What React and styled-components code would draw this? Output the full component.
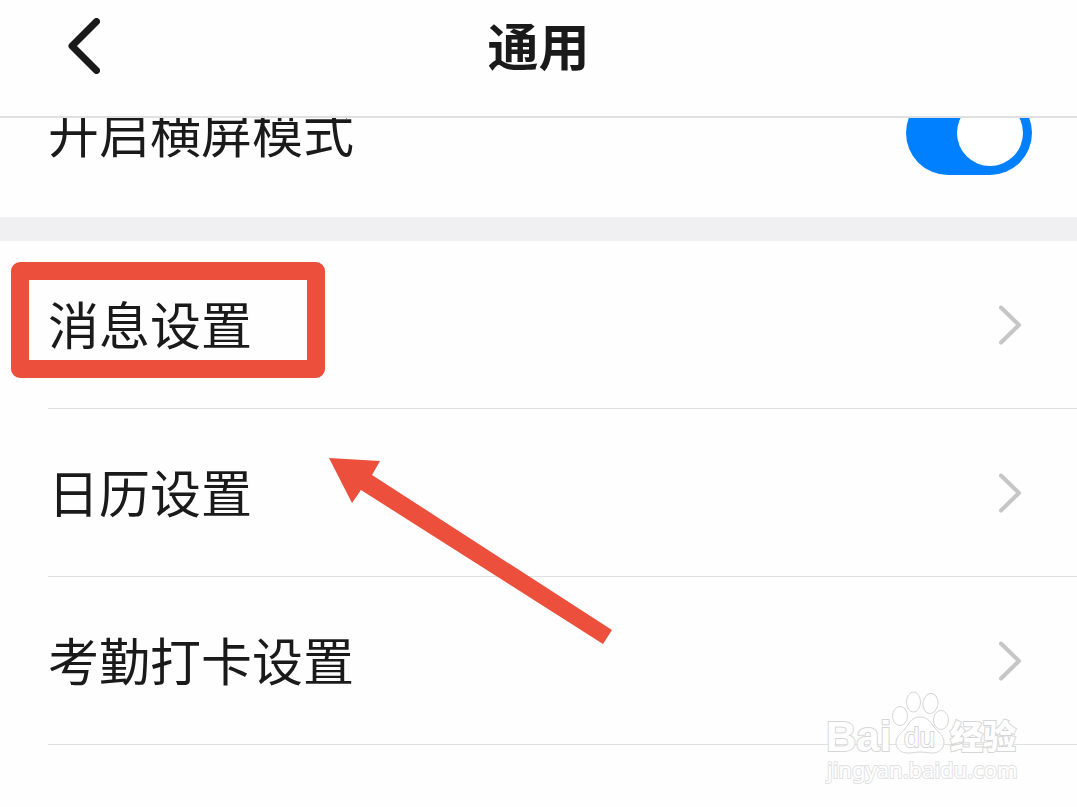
import React, { useState } from 'react';
import styled, { createGlobalStyle } from 'styled-components';

const GlobalStyle = createGlobalStyle`
  * {
    box-sizing: border-box;
  }
  body {
    margin: 0;
    background: #fefefe;
    color: #1a1a1a;
    font-family: "Noto Sans CJK SC", sans-serif;
    overflow: hidden;
  }
`;

const items = ['消息设置', '日历设置', '考勤打卡设置'];

const Chevron = () => (
  <svg width="24" height="40" viewBox="0 0 24 40" fill="none" stroke="#c6c6c6" strokeWidth="4" strokeLinecap="round" strokeLinejoin="round">
    <path d="M3 2.5 L21 20 L3 37.5" />
  </svg>
);

const Watermark = () => (
  <Mark width="200" height="100" viewBox="0 0 200 100" fill="#fff" fillOpacity="0.7" stroke="#d6d6d6" strokeWidth="1">
    <ellipse cx="75" cy="28" rx="7.5" ry="9.5" />
    <ellipse cx="88.5" cy="14" rx="7" ry="10" />
    <ellipse cx="105.5" cy="15.5" rx="7.5" ry="10" transform="rotate(8 105.5 15.5)" />
    <ellipse cx="116" cy="32" rx="7.5" ry="9.5" />
    <path d="M95 29 C87 29 84 35 80 41 C75 46 71 49 71 55 C71 62 77 65 83 65 C88 65 91 64 95 64 C100 64 103 65 107 65 C114 65 119 61 119 54 C119 48 114 45 110 40 C106 35 103 29 95 29 Z" />
    <text x="1" y="63" fontFamily="Liberation Sans" fontWeight="700" fontSize="42">Bai</text>
    <text x="79" y="59" fontFamily="Liberation Sans" fontSize="28">du</text>
    <text x="125" y="61" fontFamily="Noto Sans CJK SC" fontWeight="900" fontSize="33">经验</text>
    <text x="2" y="90" fontFamily="Noto Sans" fontSize="22" stroke="#e2e2e2">jingyan.baidu.com</text>
  </Mark>
);

const App = () => {
  const [landscape, setLandscape] = useState(true);

  return (
    <Page>
      <GlobalStyle />
      <Header>
        <Back type="button" aria-label="返回">
          <svg width="32" height="56" viewBox="0 0 32 56" fill="none" stroke="#1a1a1a" strokeWidth="7" strokeLinecap="round" strokeLinejoin="round">
            <path d="M28.500 3.500 L4 28 L28.500 52.500" />
          </svg>
        </Back>
        <Title>通用</Title>
      </Header>
      <Clip>
        <SwitchRow>
          <Text as="label" htmlFor="landscape">开启横屏模式</Text>
          <Switch
            id="landscape"
            type="checkbox"
            checked={landscape}
            onChange={(e) => setLandscape(e.target.checked)}
          />
        </SwitchRow>
      </Clip>
      <Band />
      <List>
        {items.map((item) => (
          <Item key={item}>
            <ItemLink href="#">
              <Text>{item}</Text>
              <Chevron />
            </ItemLink>
          </Item>
        ))}
        <Frame />
        <Arrow width="290" height="192" viewBox="0 0 290 192">
          <path fill="#ec4f3b" d="M4 3 L55 6 L47 20 L287 175 L278 189 L36 35 L27 48 Z" />
        </Arrow>
      </List>
      <Watermark />
    </Page>
  );
};

export default App;

const Page = styled.div`
  position: relative;
  min-height: 100vh;
`;
const Header = styled.header`
  display: grid;
  grid-template-columns: 1fr auto 1fr;
  align-items: center;
  height: 118px;
  padding: 0 68px 24px;
  border-bottom: 2px solid #e0e0e1;
`;
const Back = styled.button`
  display: flex;
  justify-self: start;
  padding: 0;
  border: 0;
  background: none;
  cursor: pointer;
`;
const Title = styled.h1`
  margin: 0;
  padding-bottom: 4px;
  font-size: 51px;
  line-height: 72px;
  font-weight: 700;
`;
/* the first row is scrolled halfway under the header */
const Clip = styled.div`
  display: flex;
  align-items: flex-end;
  height: 99px;
  overflow: hidden;
`;
const SwitchRow = styled.div`
  display: flex;
  flex: 1;
  justify-content: space-between;
  align-items: center;
  height: 168px;
  padding: 0 45px 0 48px;
`;
const Text = styled.span`
  padding-bottom: 4px;
  font-size: 51px;
  line-height: 72px;
`;
const Switch = styled.input`
  appearance: none;
  display: flex;
  align-items: center;
  justify-content: ${(props) => (props.checked ? 'flex-end' : 'flex-start')};
  width: 126px;
  height: 84px;
  margin: 0;
  padding: 0 9px;
  border-radius: 42px;
  background: ${(props) => (props.checked ? '#0080ff' : '#d8d8d8')};
  cursor: pointer;
  &::before {
    content: '';
    width: 66px;
    height: 66px;
    border-radius: 50%;
    background: #fff;
  }
`;
const Band = styled.div`
  height: 24px;
  background: #f0f0f3;
`;
const List = styled.ul`
  position: relative;
  margin: 0;
  padding: 0;
  list-style: none;
`;
const Item = styled.li`
  margin-left: 48px;
  border-bottom: 1px solid #e1e1e1;
`;
const ItemLink = styled.a`
  display: flex;
  justify-content: space-between;
  align-items: center;
  height: 167px;
  padding-right: 55px;
  color: inherit;
  text-decoration: none;
`;
const Frame = styled.div`
  position: absolute;
  top: 21px;
  left: 11px;
  width: 314px;
  height: 116px;
  border: 18px solid #ec4f3b;
  border-radius: 9px;
  pointer-events: none;
`;
const Arrow = styled.svg`
  position: absolute;
  top: 214px;
  left: 325px;
  pointer-events: none;
`;
const Mark = styled.svg`
  position: absolute;
  top: 688px;
  right: 52px;
  pointer-events: none;
  text {
    paint-order: stroke;
    stroke-width: 2px;
    fill-opacity: 1;
  }
`;
